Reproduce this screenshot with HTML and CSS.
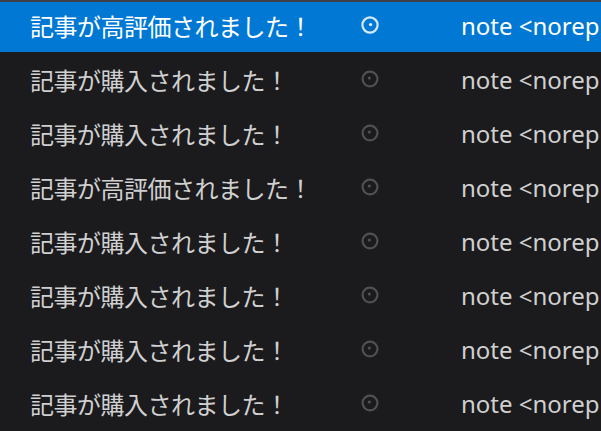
FILE: index.html
```html
<!DOCTYPE html>
<html lang="ja">
<head>
<meta charset="utf-8">
<link rel="stylesheet" href="styles.css">
</head>
<body>
<div class="topbar"></div>
<div class="list">
  <div class="row selected">
    <div class="subject">記事が高評価されました！</div>
    <div class="status"><svg viewBox="0 0 18 18" width="18" height="18"><circle cx="9" cy="9" r="7.6" fill="none" stroke="currentColor" stroke-width="2.2"/><circle cx="9.6" cy="8.6" r="1.7" fill="currentColor"/></svg></div>
    <div class="from">note &lt;noreply@note.com&gt;</div>
  </div>
  <div class="row">
    <div class="subject">記事が購入されました！</div>
    <div class="status"><svg viewBox="0 0 18 18" width="18" height="18"><circle cx="9" cy="9" r="7.4" fill="none" stroke="currentColor" stroke-width="2.2"/><circle cx="8.3" cy="8" r="1.6" fill="currentColor"/></svg></div>
    <div class="from">note &lt;noreply@note.com&gt;</div>
  </div>
  <div class="row">
    <div class="subject">記事が購入されました！</div>
    <div class="status"><svg viewBox="0 0 18 18" width="18" height="18"><circle cx="9" cy="9" r="7.4" fill="none" stroke="currentColor" stroke-width="2.2"/><circle cx="8.3" cy="8" r="1.6" fill="currentColor"/></svg></div>
    <div class="from">note &lt;noreply@note.com&gt;</div>
  </div>
  <div class="row">
    <div class="subject">記事が高評価されました！</div>
    <div class="status"><svg viewBox="0 0 18 18" width="18" height="18"><circle cx="9" cy="9" r="7.4" fill="none" stroke="currentColor" stroke-width="2.2"/><circle cx="8.3" cy="8" r="1.6" fill="currentColor"/></svg></div>
    <div class="from">note &lt;noreply@note.com&gt;</div>
  </div>
  <div class="row">
    <div class="subject">記事が購入されました！</div>
    <div class="status"><svg viewBox="0 0 18 18" width="18" height="18"><circle cx="9" cy="9" r="7.4" fill="none" stroke="currentColor" stroke-width="2.2"/><circle cx="8.3" cy="8" r="1.6" fill="currentColor"/></svg></div>
    <div class="from">note &lt;noreply@note.com&gt;</div>
  </div>
  <div class="row">
    <div class="subject">記事が購入されました！</div>
    <div class="status"><svg viewBox="0 0 18 18" width="18" height="18"><circle cx="9" cy="9" r="7.4" fill="none" stroke="currentColor" stroke-width="2.2"/><circle cx="8.3" cy="8" r="1.6" fill="currentColor"/></svg></div>
    <div class="from">note &lt;noreply@note.com&gt;</div>
  </div>
  <div class="row">
    <div class="subject">記事が購入されました！</div>
    <div class="status"><svg viewBox="0 0 18 18" width="18" height="18"><circle cx="9" cy="9" r="7.4" fill="none" stroke="currentColor" stroke-width="2.2"/><circle cx="8.3" cy="8" r="1.6" fill="currentColor"/></svg></div>
    <div class="from">note &lt;noreply@note.com&gt;</div>
  </div>
  <div class="row">
    <div class="subject">記事が購入されました！</div>
    <div class="status"><svg viewBox="0 0 18 18" width="18" height="18"><circle cx="9" cy="9" r="7.4" fill="none" stroke="currentColor" stroke-width="2.2"/><circle cx="8.3" cy="8" r="1.6" fill="currentColor"/></svg></div>
    <div class="from">note &lt;noreply@note.com&gt;</div>
  </div>
</div>
</body>
</html>
```
FILE: styles.css
```css
html, body {
  margin: 0;
  padding: 0;
  background: #1b1b1e;
  overflow: hidden;
  width: 601px;
  height: 431px;
}
body {
  font-family: "Noto Sans", "Noto Sans CJK JP", sans-serif;
  font-size: 24px;
  color: #d0d0d0;
}
.topbar {
  height: 2px;
  background: #3c3f46;
}
.list {
  display: flex;
  flex-direction: column;
}
.row {
  display: grid;
  grid-template-columns: 331px 100px 1fr;
  align-items: center;
  height: 54px;
  padding-left: 30px;
  white-space: nowrap;
  overflow: hidden;
}
.row.selected {
  height: 46px;
  padding-bottom: 4px;
  background: #0078d4;
  color: #ffffff;
}
.subject {
  font-family: "Noto Sans CJK JP", sans-serif;
  letter-spacing: -0.5px;
  overflow: hidden;
}
.status {
  display: flex;
  align-items: center;
  color: #505054;
}
.selected .status {
  color: #d6e9fa;
}
.from {
  overflow: hidden;
}
```
